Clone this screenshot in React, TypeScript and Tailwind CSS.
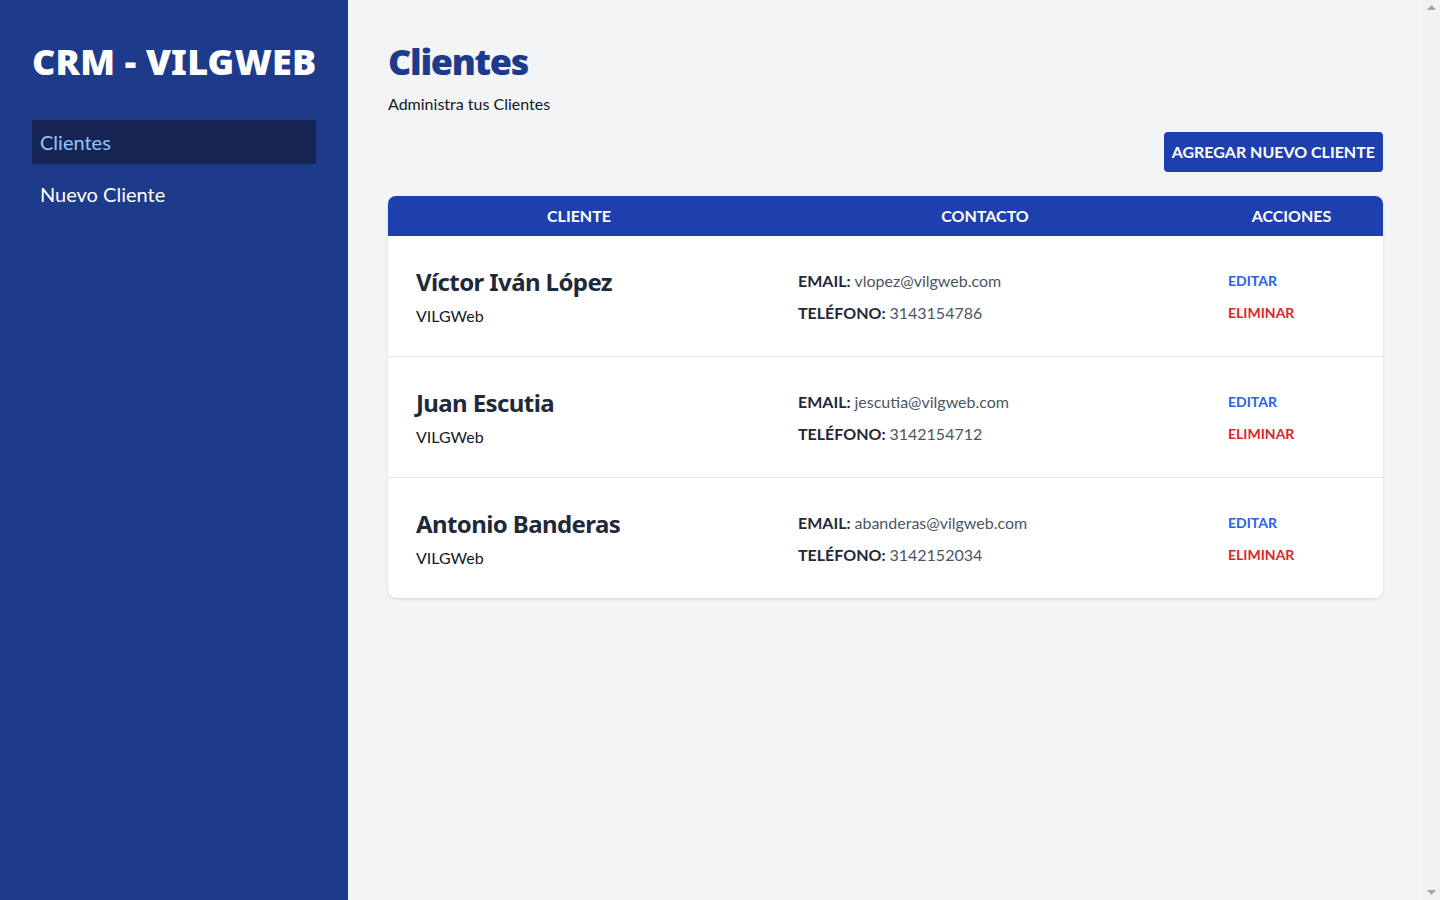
import React from "react";

const clientes = [
  { nombre: "Víctor Iván López", empresa: "VILGWeb", email: "vlopez@vilgweb.com", telefono: "3143154786" },
  { nombre: "Juan Escutia", empresa: "VILGWeb", email: "jescutia@vilgweb.com", telefono: "3142154712" },
  { nombre: "Antonio Banderas", empresa: "VILGWeb", email: "abanderas@vilgweb.com", telefono: "3142152034" },
];

function Scrollbar() {
  return (
    <div className="w-[17px] shrink-0 h-screen bg-[#f1f1f1] flex flex-col justify-between items-center py-[5px]">
      <svg width="9" height="5" viewBox="0 0 9 5"><path d="M4.5 0L9 5H0z" fill="#a3a3a3" /></svg>
      <svg width="9" height="5" viewBox="0 0 9 5"><path d="M0 0h9L4.5 5z" fill="#a3a3a3" /></svg>
    </div>
  );
}

const heading = { fontFamily: '"Noto Sans", Lato, sans-serif' };

export default function App() {
  return (
    <div
      className="flex h-screen overflow-hidden bg-[#f3f4f6]"
      style={{ fontFamily: 'Lato, "Noto Sans", sans-serif' }}
    >
      <aside className="bg-[#1e3a8a] w-[348px] px-8 py-10 shrink-0">
        <h2 style={heading} className="text-4xl font-black text-white leading-[44px] whitespace-nowrap tracking-[0.2px]">
          CRM - VILGWEB
        </h2>
        <nav className="mt-9">
          <a className="block bg-[#172554] text-[#93c5fd] text-xl px-2 py-2 leading-7">Clientes</a>
          <a className="block text-white text-xl px-2 py-2 leading-7 mt-2">Nuevo Cliente</a>
        </nav>
      </aside>
      <main className="flex-1 p-10">
        <h1 style={heading} className="text-4xl font-black text-[#1e3a8a] leading-[44px] tracking-[-1.3px]">
          Clientes
        </h1>
        <p className="mt-2 text-base text-[#111827] leading-6">Administra tus Clientes</p>
        <div className="flex justify-end mt-4">
          <button className="bg-[#1e40af] text-white font-bold uppercase px-2 py-2 rounded text-base leading-6">
            Agregar Nuevo Cliente
          </button>
        </div>
        <div className="mt-6 bg-white rounded-lg shadow overflow-hidden">
          <div className="grid grid-cols-[382px_430px_1fr] bg-[#1e40af] text-white font-bold text-base h-10 items-center">
            <div className="text-center">CLIENTE</div>
            <div className="text-center">CONTACTO</div>
            <div className="text-center">ACCIONES</div>
          </div>
          {clientes.map((c, i) => (
            <div
              key={c.email}
              className={`grid grid-cols-[382px_430px_1fr] items-center pt-[30px] pb-[28px] ${i < clientes.length - 1 ? "border-b border-[#e5e7eb]" : ""}`}
            >
              <div className="pl-7">
                <p style={heading} className="text-2xl font-bold text-[#1f2937] leading-8 tracking-[-0.6px]">
                  {c.nombre}
                </p>
                <p className="mt-1.5 text-[#111827] leading-6">{c.empresa}</p>
              </div>
              <div className="pl-7">
                <p className="text-[#4b5563] leading-6">
                  <span className="font-bold text-[#1f2937]">EMAIL: </span>
                  {c.email}
                </p>
                <p className="mt-2 text-[#4b5563] leading-6">
                  <span className="font-bold text-[#1f2937]">TELÉFONO: </span>
                  {c.telefono}
                </p>
              </div>
              <div className="pl-7 flex flex-col items-start gap-3">
                <button className="text-[#2563eb] font-bold text-sm uppercase leading-5">Editar</button>
                <button className="text-[#dc2626] font-bold text-sm uppercase leading-5">Eliminar</button>
              </div>
            </div>
          ))}
        </div>
      </main>
      <Scrollbar />
    </div>
  );
}
